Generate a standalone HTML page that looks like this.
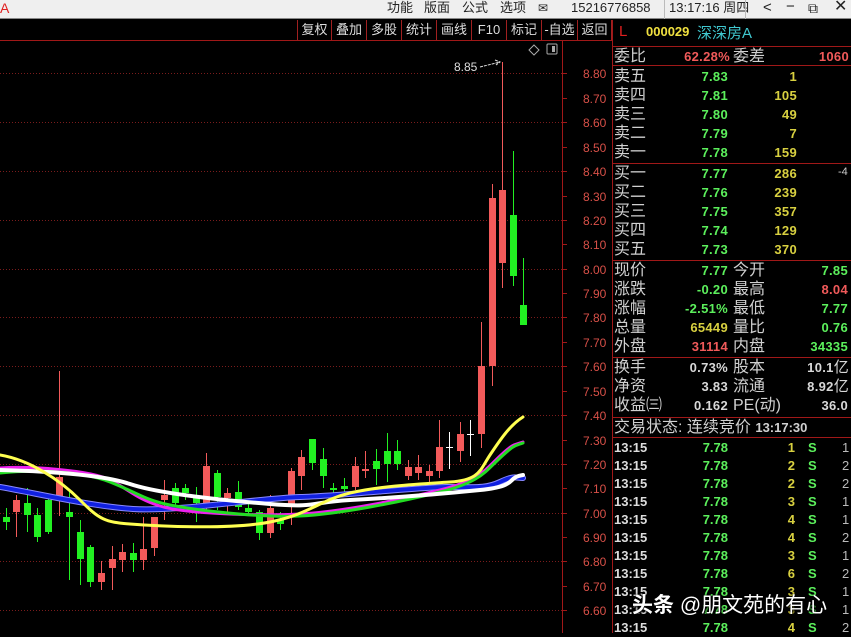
<!DOCTYPE html>
<html><head><meta charset="utf-8">
<style>
*{margin:0;padding:0;box-sizing:border-box}
body{width:851px;height:633px;overflow:hidden;background:#000;position:relative;font-family:"Liberation Sans","Noto Sans CJK SC",sans-serif}
.top{position:absolute;left:0;top:0;width:851px;height:19px;background:#efefef;border-bottom:1px solid #888}
.top span{position:absolute;top:0;line-height:16px;font-size:13px;color:#222;font-family:"Liberation Sans","Noto Sans CJK SC",sans-serif}
.tb{position:absolute;top:20px;height:20px;font-size:13px;color:#ddd;line-height:20px;text-align:center;border-left:1px solid #a02020;font-family:"Liberation Sans","Noto Sans CJK SC",sans-serif}
.p{position:absolute;font-family:"Liberation Sans","Noto Sans CJK SC",sans-serif;white-space:nowrap}
.l{font-size:16px;color:#d0d0d0;line-height:19px;left:614px}
.n{font-size:13px;font-weight:bold;line-height:19px;text-align:right;letter-spacing:0.3px}
.g{color:#5cf05c}.y{color:#d8d040}.r{color:#f05a5a}.w{color:#d8d8d8}
.hl{position:absolute;left:612px;width:239px;height:1px;background:#a01818}
</style></head><body>
<div class="top">
<span style="left:0;color:#e02020;font-size:14px">A</span>
<span style="left:387px">功能</span><span style="left:424px">版面</span><span style="left:462px">公式</span><span style="left:500px">选项</span>
<span style="left:538px;font-size:12px">✉</span>
<span style="left:571px">15216776858</span>
<div style="position:absolute;left:664px;top:0;width:1px;height:19px;background:#bbb"></div>
<span style="left:669px">13:17:16 周四</span>
<div style="position:absolute;left:745px;top:0;width:1px;height:19px;background:#bbb"></div>
<span style="left:763px;font-size:15px">&lt;</span>
<span style="left:786px;font-size:15px;top:-1px">−</span>
<span style="left:808px;font-size:14px">⧉</span>
<span style="left:834px;font-size:16px;top:-1px">✕</span>
</div>
<div class="tb" style="left:297px;width:34px">复权</div>
<div class="tb" style="left:331px;width:35px">叠加</div>
<div class="tb" style="left:366px;width:35px">多股</div>
<div class="tb" style="left:401px;width:35px">统计</div>
<div class="tb" style="left:436px;width:35px">画线</div>
<div class="tb" style="left:471px;width:35px">F10</div>
<div class="tb" style="left:506px;width:35px">标记</div>
<div class="tb" style="left:541px;width:36px">-自选</div>
<div class="tb" style="left:577px;width:35px;border-right:1px solid #a02020">返回</div>
<div style="position:absolute;left:0;top:40px;width:612px;height:1px;background:#a01818"></div>

<svg style="position:absolute;left:0;top:0" width="612" height="633">
<g stroke="#7a1c1c" stroke-dasharray="1 2" stroke-width="1">
<line x1="0" y1="73.5" x2="562" y2="73.5"/><line x1="0" y1="122.5" x2="562" y2="122.5"/><line x1="0" y1="171.5" x2="562" y2="171.5"/><line x1="0" y1="220.5" x2="562" y2="220.5"/><line x1="0" y1="269.5" x2="562" y2="269.5"/><line x1="0" y1="317.5" x2="562" y2="317.5"/><line x1="0" y1="366.5" x2="562" y2="366.5"/><line x1="0" y1="415.5" x2="562" y2="415.5"/><line x1="0" y1="464.5" x2="562" y2="464.5"/><line x1="0" y1="513.5" x2="562" y2="513.5"/><line x1="0" y1="561.5" x2="562" y2="561.5"/><line x1="0" y1="610.5" x2="562" y2="610.5"/>
</g>
<line x1="562.5" y1="40" x2="562.5" y2="633" stroke="#a01818"/>
<g stroke="#a01818">
<line x1="562" y1="73.5" x2="567" y2="73.5"/><line x1="562" y1="98.5" x2="567" y2="98.5"/><line x1="562" y1="122.5" x2="567" y2="122.5"/><line x1="562" y1="147.5" x2="567" y2="147.5"/><line x1="562" y1="171.5" x2="567" y2="171.5"/><line x1="562" y1="196.5" x2="567" y2="196.5"/><line x1="562" y1="220.5" x2="567" y2="220.5"/><line x1="562" y1="244.5" x2="567" y2="244.5"/><line x1="562" y1="269.5" x2="567" y2="269.5"/><line x1="562" y1="293.5" x2="567" y2="293.5"/><line x1="562" y1="317.5" x2="567" y2="317.5"/><line x1="562" y1="342.5" x2="567" y2="342.5"/><line x1="562" y1="366.5" x2="567" y2="366.5"/><line x1="562" y1="391.5" x2="567" y2="391.5"/><line x1="562" y1="415.5" x2="567" y2="415.5"/><line x1="562" y1="440.5" x2="567" y2="440.5"/><line x1="562" y1="464.5" x2="567" y2="464.5"/><line x1="562" y1="488.5" x2="567" y2="488.5"/><line x1="562" y1="513.5" x2="567" y2="513.5"/><line x1="562" y1="537.5" x2="567" y2="537.5"/><line x1="562" y1="561.5" x2="567" y2="561.5"/><line x1="562" y1="586.5" x2="567" y2="586.5"/><line x1="562" y1="610.5" x2="567" y2="610.5"/>
</g>
<g fill="#d85048" font-size="12" font-family="Liberation Sans, sans-serif">
<text x="583" y="78">8.80</text><text x="583" y="103">8.70</text><text x="583" y="127">8.60</text><text x="583" y="152">8.50</text><text x="583" y="176">8.40</text><text x="583" y="201">8.30</text><text x="583" y="225">8.20</text><text x="583" y="249">8.10</text><text x="583" y="274">8.00</text><text x="583" y="298">7.90</text><text x="583" y="322">7.80</text><text x="583" y="347">7.70</text><text x="583" y="371">7.60</text><text x="583" y="396">7.50</text><text x="583" y="420">7.40</text><text x="583" y="445">7.30</text><text x="583" y="469">7.20</text><text x="583" y="493">7.10</text><text x="583" y="518">7.00</text><text x="583" y="542">6.90</text><text x="583" y="566">6.80</text><text x="583" y="591">6.70</text><text x="583" y="615">6.60</text>
</g>
<text x="454" y="71" fill="#ddd" font-size="12" font-family="Liberation Sans, sans-serif">8.85</text>
<path d="M480 67 L500 62 M495 60 L500 62 L496 65" stroke="#ddd" fill="none" stroke-dasharray="3 1"/>
<path d="M534 45 L539 50 L534 55 L529 50Z" stroke="#aaa" fill="none"/>
<rect x="547" y="44" width="10" height="10" stroke="#aaa" fill="none" rx="1"/><rect x="552" y="46" width="3" height="6" fill="#aaa"/>

<g stroke-width="1">
<line x1="6.5" y1="508" x2="6.5" y2="530" stroke="#22f022"/><rect x="3" y="517" width="7" height="5" fill="#22f022"/>
<line x1="16.5" y1="495" x2="16.5" y2="537" stroke="#f25a5a"/><rect x="13" y="500" width="7" height="12" fill="#f25a5a"/>
<line x1="27.5" y1="488" x2="27.5" y2="532" stroke="#22f022"/><rect x="24" y="503" width="7" height="12" fill="#22f022"/>
<line x1="37.5" y1="508" x2="37.5" y2="542" stroke="#22f022"/><rect x="34" y="515" width="7" height="22" fill="#22f022"/>
<line x1="48.5" y1="498" x2="48.5" y2="534" stroke="#22f022"/><rect x="45" y="500" width="7" height="32" fill="#22f022"/>
<line x1="59.5" y1="371" x2="59.5" y2="516" stroke="#f25a5a"/><rect x="56" y="477" width="7" height="20" fill="#f25a5a"/>
<line x1="69.5" y1="492" x2="69.5" y2="580" stroke="#22f022"/><rect x="66" y="512" width="7" height="5" fill="#22f022"/>
<line x1="80.5" y1="520" x2="80.5" y2="585" stroke="#22f022"/><rect x="77" y="532" width="7" height="27" fill="#22f022"/>
<line x1="90.5" y1="545" x2="90.5" y2="587" stroke="#22f022"/><rect x="87" y="547" width="7" height="35" fill="#22f022"/>
<line x1="101.5" y1="561" x2="101.5" y2="590" stroke="#f25a5a"/><rect x="98" y="573" width="7" height="9" fill="#f25a5a"/>
<line x1="112.5" y1="546" x2="112.5" y2="590" stroke="#f25a5a"/><rect x="109" y="559" width="7" height="9" fill="#f25a5a"/>
<line x1="122.5" y1="544" x2="122.5" y2="572" stroke="#f25a5a"/><rect x="119" y="552" width="7" height="8" fill="#f25a5a"/>
<line x1="133.5" y1="543" x2="133.5" y2="572" stroke="#22f022"/><rect x="130" y="553" width="7" height="7" fill="#22f022"/>
<line x1="143.5" y1="517" x2="143.5" y2="570" stroke="#f25a5a"/><rect x="140" y="549" width="7" height="11" fill="#f25a5a"/>
<line x1="154.5" y1="517" x2="154.5" y2="556" stroke="#f25a5a"/><rect x="151" y="517" width="7" height="31" fill="#f25a5a"/>
<line x1="164.5" y1="480" x2="164.5" y2="520" stroke="#f25a5a"/><rect x="161" y="495" width="7" height="5" fill="#f25a5a"/>
<line x1="175.5" y1="483" x2="175.5" y2="505" stroke="#22f022"/><rect x="172" y="488" width="7" height="15" fill="#22f022"/>
<line x1="185.5" y1="484" x2="185.5" y2="500" stroke="#22f022"/><rect x="182" y="488" width="7" height="5" fill="#22f022"/>
<line x1="196.5" y1="487" x2="196.5" y2="522" stroke="#22f022"/><rect x="193" y="497" width="7" height="6" fill="#22f022"/>
<line x1="206.5" y1="453" x2="206.5" y2="510" stroke="#f25a5a"/><rect x="203" y="466" width="7" height="41" fill="#f25a5a"/>
<line x1="217.5" y1="470" x2="217.5" y2="510" stroke="#22f022"/><rect x="214" y="473" width="7" height="24" fill="#22f022"/>
<line x1="227.5" y1="488" x2="227.5" y2="512" stroke="#f25a5a"/><rect x="224" y="493" width="7" height="5" fill="#f25a5a"/>
<line x1="238.5" y1="481" x2="238.5" y2="510" stroke="#22f022"/><rect x="235" y="492" width="7" height="15" fill="#22f022"/>
<line x1="248.5" y1="500" x2="248.5" y2="515" stroke="#22f022"/><rect x="245" y="508" width="7" height="4" fill="#22f022"/>
<line x1="259.5" y1="510" x2="259.5" y2="540" stroke="#22f022"/><rect x="256" y="512" width="7" height="21" fill="#22f022"/>
<line x1="270.5" y1="495" x2="270.5" y2="538" stroke="#f25a5a"/><rect x="267" y="508" width="7" height="25" fill="#f25a5a"/>
<line x1="280.5" y1="512" x2="280.5" y2="530" stroke="#22f022"/><rect x="277" y="520" width="7" height="4" fill="#22f022"/>
<line x1="291.5" y1="468" x2="291.5" y2="525" stroke="#f25a5a"/><rect x="288" y="471" width="7" height="36" fill="#f25a5a"/>
<line x1="301.5" y1="450" x2="301.5" y2="490" stroke="#f25a5a"/><rect x="298" y="457" width="7" height="19" fill="#f25a5a"/>
<line x1="312.5" y1="439" x2="312.5" y2="470" stroke="#22f022"/><rect x="309" y="439" width="7" height="24" fill="#22f022"/>
<line x1="323.5" y1="448" x2="323.5" y2="488" stroke="#22f022"/><rect x="320" y="459" width="7" height="17" fill="#22f022"/>
<line x1="333.5" y1="483" x2="333.5" y2="496" stroke="#22f022"/><rect x="330" y="488" width="7" height="2" fill="#22f022"/>
<line x1="344.5" y1="478" x2="344.5" y2="495" stroke="#22f022"/><rect x="341" y="486" width="7" height="3" fill="#22f022"/>
<line x1="355.5" y1="457" x2="355.5" y2="490" stroke="#f25a5a"/><rect x="352" y="466" width="7" height="21" fill="#f25a5a"/>
<line x1="365.5" y1="451" x2="365.5" y2="478" stroke="#f25a5a"/><rect x="362" y="469" width="7" height="2" fill="#f25a5a"/>
<line x1="376.5" y1="449" x2="376.5" y2="485" stroke="#22f022"/><rect x="373" y="461" width="7" height="8" fill="#22f022"/>
<line x1="387.5" y1="433" x2="387.5" y2="482" stroke="#22f022"/><rect x="384" y="451" width="7" height="13" fill="#22f022"/>
<line x1="397.5" y1="440" x2="397.5" y2="470" stroke="#22f022"/><rect x="394" y="451" width="7" height="13" fill="#22f022"/>
<line x1="408.5" y1="460" x2="408.5" y2="480" stroke="#f25a5a"/><rect x="405" y="467" width="7" height="9" fill="#f25a5a"/>
<line x1="418.5" y1="455" x2="418.5" y2="480" stroke="#f25a5a"/><rect x="415" y="467" width="7" height="6" fill="#f25a5a"/>
<line x1="429.5" y1="465" x2="429.5" y2="483" stroke="#f25a5a"/><rect x="426" y="471" width="7" height="5" fill="#f25a5a"/>
<line x1="439.5" y1="420" x2="439.5" y2="478" stroke="#f25a5a"/><rect x="436" y="447" width="7" height="24" fill="#f25a5a"/>
<line x1="449.5" y1="432" x2="449.5" y2="469" stroke="#fff"/><line x1="446" y1="447.5" x2="453" y2="447.5" stroke="#fff"/>
<line x1="460.5" y1="422" x2="460.5" y2="462" stroke="#f25a5a"/><rect x="457" y="434" width="7" height="17" fill="#f25a5a"/>
<line x1="470.5" y1="420" x2="470.5" y2="456" stroke="#fff"/><line x1="467" y1="434.5" x2="474" y2="434.5" stroke="#fff"/>
<line x1="481.5" y1="322" x2="481.5" y2="448" stroke="#f25a5a"/><rect x="478" y="366" width="7" height="68" fill="#f25a5a"/>
<line x1="492.5" y1="184" x2="492.5" y2="386" stroke="#f25a5a"/><rect x="489" y="198" width="7" height="168" fill="#f25a5a"/>
<line x1="502.5" y1="62" x2="502.5" y2="288" stroke="#f25a5a"/><rect x="499" y="190" width="7" height="73" fill="#f25a5a"/>
<line x1="513.5" y1="151" x2="513.5" y2="286" stroke="#22f022"/><rect x="510" y="215" width="7" height="61" fill="#22f022"/>
<line x1="523.5" y1="258" x2="523.5" y2="325" stroke="#22f022"/><rect x="520" y="305" width="7" height="20" fill="#22f022"/>
</g>
<g fill="none" stroke-linejoin="round" stroke-linecap="round">
<path stroke="#8888ff" stroke-width="6" d="M0,487 C40,494 90,506 133,509 S260,498 300,497 S420,487 447,487 S485,489 500,482 S515,478 523,478"/>
<path stroke="#1020e0" stroke-width="4" d="M0,487 C40,494 90,506 133,509 S260,498 300,497 S420,487 447,487 S485,489 500,482 S515,478 523,478"/>
<path stroke="#ee22ee" stroke-width="3" d="M0,468 C30,466 90,470 110,480 S135,498 160,506 S260,516 300,514 S400,500 440,490 S485,470 500,456 S515,445 523,442"/>
<path stroke="#22dd22" stroke-width="3" d="M0,473 C30,470 80,470 110,482 S145,500 170,505 S260,518 300,516 S400,502 440,492 S485,472 500,458 S515,446 523,443"/>
<path stroke="#ffffff" stroke-width="4" d="M0,470 C40,471 100,474 130,484 S220,500 270,504 S310,502 350,500 S440,494 480,490 S505,478 523,475"/>
<path stroke="#ffff50" stroke-width="3" d="M0,455 C30,460 60,480 80,500 S105,522 130,524 S230,530 270,522 S320,500 350,493 S420,484 450,482 S480,470 490,455 S510,425 523,417"/>
</g>
</svg>

<div style="position:absolute;left:612px;top:20px;width:1px;height:613px;background:#a01818"></div>
<div class="p" style="left:619px;top:23px;font-size:15px;color:#e02020">L</div>
<div class="p" style="left:646px;top:24px;font-size:13px;font-weight:bold;color:#f0e040">000029</div>
<div class="p" style="left:697px;top:22px;font-size:15px;color:#40c8d0">深深房A</div>
<div class="hl" style="top:46px"></div>
<div class="p l" style="top:47px">委比</div><div class="p n r" style="left:620px;width:110px;top:47px">62.28%</div>
<div class="p l" style="left:733px;top:47px">委差</div><div class="p n r" style="left:760px;width:89px;top:47px">1060</div>
<div class="hl" style="top:65px"></div>

<div class="p l" style="top:67px">卖五</div><div class="p n g" style="left:640px;width:88px;top:67px">7.83</div><div class="p n y" style="left:740px;width:57px;top:67px">1</div>
<div class="p l" style="top:86px">卖四</div><div class="p n g" style="left:640px;width:88px;top:86px">7.81</div><div class="p n y" style="left:740px;width:57px;top:86px">105</div>
<div class="p l" style="top:105px">卖三</div><div class="p n g" style="left:640px;width:88px;top:105px">7.80</div><div class="p n y" style="left:740px;width:57px;top:105px">49</div>
<div class="p l" style="top:124px">卖二</div><div class="p n g" style="left:640px;width:88px;top:124px">7.79</div><div class="p n y" style="left:740px;width:57px;top:124px">7</div>
<div class="p l" style="top:143px">卖一</div><div class="p n g" style="left:640px;width:88px;top:143px">7.78</div><div class="p n y" style="left:740px;width:57px;top:143px">159</div>
<div class="hl" style="top:163px"></div>
<div class="p l" style="top:164px">买一</div><div class="p n g" style="left:640px;width:88px;top:164px">7.77</div><div class="p n y" style="left:740px;width:57px;top:164px">286</div><div class="p" style="left:838px;top:166px;font-size:11px;color:#ccc">-4</div>
<div class="p l" style="top:183px">买二</div><div class="p n g" style="left:640px;width:88px;top:183px">7.76</div><div class="p n y" style="left:740px;width:57px;top:183px">239</div>
<div class="p l" style="top:202px">买三</div><div class="p n g" style="left:640px;width:88px;top:202px">7.75</div><div class="p n y" style="left:740px;width:57px;top:202px">357</div>
<div class="p l" style="top:221px">买四</div><div class="p n g" style="left:640px;width:88px;top:221px">7.74</div><div class="p n y" style="left:740px;width:57px;top:221px">129</div>
<div class="p l" style="top:240px">买五</div><div class="p n g" style="left:640px;width:88px;top:240px">7.73</div><div class="p n y" style="left:740px;width:57px;top:240px">370</div>
<div class="hl" style="top:260px"></div>

<div class="p l" style="top:261px">现价</div><div class="p n g" style="left:640px;width:88px;top:261px">7.77</div><div class="p l" style="left:733px;top:261px">今开</div><div class="p n g" style="left:760px;width:88px;top:261px">7.85</div>
<div class="p l" style="top:280px">涨跌</div><div class="p n g" style="left:640px;width:88px;top:280px">-0.20</div><div class="p l" style="left:733px;top:280px">最高</div><div class="p n r" style="left:760px;width:88px;top:280px">8.04</div>
<div class="p l" style="top:299px">涨幅</div><div class="p n g" style="left:640px;width:88px;top:299px">-2.51%</div><div class="p l" style="left:733px;top:299px">最低</div><div class="p n g" style="left:760px;width:88px;top:299px">7.77</div>
<div class="p l" style="top:318px">总量</div><div class="p n y" style="left:640px;width:88px;top:318px">65449</div><div class="p l" style="left:733px;top:318px">量比</div><div class="p n g" style="left:760px;width:88px;top:318px">0.76</div>
<div class="p l" style="top:337px">外盘</div><div class="p n r" style="left:640px;width:88px;top:337px">31114</div><div class="p l" style="left:733px;top:337px">内盘</div><div class="p n g" style="left:760px;width:88px;top:337px">34335</div>
<div class="hl" style="top:357px"></div>
<div class="p l" style="top:358px">换手</div><div class="p n w" style="left:640px;width:88px;top:358px">0.73%</div><div class="p l" style="left:733px;top:358px">股本</div><div class="p n w" style="left:760px;width:89px;top:358px">10.1<span style="font-weight:normal;font-size:15px">亿</span></div>
<div class="p l" style="top:377px">净资</div><div class="p n w" style="left:640px;width:88px;top:377px">3.83</div><div class="p l" style="left:733px;top:377px">流通</div><div class="p n w" style="left:760px;width:89px;top:377px">8.92<span style="font-weight:normal;font-size:15px">亿</span></div>
<div class="p l" style="top:396px">收益㈢</div><div class="p n w" style="left:640px;width:88px;top:396px">0.162</div><div class="p l" style="left:733px;top:396px">PE(动)</div><div class="p n w" style="left:760px;width:88px;top:396px">36.0</div>
<div class="hl" style="top:417px"></div>
<div class="p l" style="top:418px">交易状态: 连续竞价 <span style="font-size:13px;font-weight:bold">13:17:30</span></div>
<div class="hl" style="top:437px"></div>

<div style="position:absolute;left:614px;top:439px;width:237px;font-family:'Liberation Sans',sans-serif;font-size:13px;font-weight:bold;line-height:18px">
<div style="position:relative;height:18px"><span style="position:absolute;left:0;color:#ddd">13:15</span><span style="position:absolute;right:123px;color:#5cf05c">7.78</span><span style="position:absolute;right:56px;color:#d8d040">1</span><span style="position:absolute;left:194px;color:#5cf05c">S</span><span style="position:absolute;left:228px;color:#bbb;font-weight:normal">1</span></div>
<div style="position:relative;height:18px"><span style="position:absolute;left:0;color:#ddd">13:15</span><span style="position:absolute;right:123px;color:#5cf05c">7.78</span><span style="position:absolute;right:56px;color:#d8d040">2</span><span style="position:absolute;left:194px;color:#5cf05c">S</span><span style="position:absolute;left:228px;color:#bbb;font-weight:normal">2</span></div>
<div style="position:relative;height:18px"><span style="position:absolute;left:0;color:#ddd">13:15</span><span style="position:absolute;right:123px;color:#5cf05c">7.78</span><span style="position:absolute;right:56px;color:#d8d040">2</span><span style="position:absolute;left:194px;color:#5cf05c">S</span><span style="position:absolute;left:228px;color:#bbb;font-weight:normal">2</span></div>
<div style="position:relative;height:18px"><span style="position:absolute;left:0;color:#ddd">13:15</span><span style="position:absolute;right:123px;color:#5cf05c">7.78</span><span style="position:absolute;right:56px;color:#d8d040">3</span><span style="position:absolute;left:194px;color:#5cf05c">S</span><span style="position:absolute;left:228px;color:#bbb;font-weight:normal">1</span></div>
<div style="position:relative;height:18px"><span style="position:absolute;left:0;color:#ddd">13:15</span><span style="position:absolute;right:123px;color:#5cf05c">7.78</span><span style="position:absolute;right:56px;color:#d8d040">4</span><span style="position:absolute;left:194px;color:#5cf05c">S</span><span style="position:absolute;left:228px;color:#bbb;font-weight:normal">1</span></div>
<div style="position:relative;height:18px"><span style="position:absolute;left:0;color:#ddd">13:15</span><span style="position:absolute;right:123px;color:#5cf05c">7.78</span><span style="position:absolute;right:56px;color:#d8d040">4</span><span style="position:absolute;left:194px;color:#5cf05c">S</span><span style="position:absolute;left:228px;color:#bbb;font-weight:normal">2</span></div>
<div style="position:relative;height:18px"><span style="position:absolute;left:0;color:#ddd">13:15</span><span style="position:absolute;right:123px;color:#5cf05c">7.78</span><span style="position:absolute;right:56px;color:#d8d040">3</span><span style="position:absolute;left:194px;color:#5cf05c">S</span><span style="position:absolute;left:228px;color:#bbb;font-weight:normal">1</span></div>
<div style="position:relative;height:18px"><span style="position:absolute;left:0;color:#ddd">13:15</span><span style="position:absolute;right:123px;color:#5cf05c">7.78</span><span style="position:absolute;right:56px;color:#d8d040">6</span><span style="position:absolute;left:194px;color:#5cf05c">S</span><span style="position:absolute;left:228px;color:#bbb;font-weight:normal">2</span></div>
<div style="position:relative;height:18px"><span style="position:absolute;left:0;color:#ddd">13:15</span><span style="position:absolute;right:123px;color:#5cf05c">7.78</span><span style="position:absolute;right:56px;color:#d8d040">3</span><span style="position:absolute;left:194px;color:#5cf05c">S</span><span style="position:absolute;left:228px;color:#bbb;font-weight:normal">1</span></div>
<div style="position:relative;height:18px"><span style="position:absolute;left:0;color:#ddd">13:15</span><span style="position:absolute;right:123px;color:#5cf05c">7.78</span><span style="position:absolute;right:56px;color:#d8d040">3</span><span style="position:absolute;left:194px;color:#5cf05c">S</span><span style="position:absolute;left:228px;color:#bbb;font-weight:normal">1</span></div>
<div style="position:relative;height:18px"><span style="position:absolute;left:0;color:#ddd">13:15</span><span style="position:absolute;right:123px;color:#5cf05c">7.78</span><span style="position:absolute;right:56px;color:#d8d040">4</span><span style="position:absolute;left:194px;color:#5cf05c">S</span><span style="position:absolute;left:228px;color:#bbb;font-weight:normal">2</span></div>
</div>

<div class="p" style="left:632px;top:589px;font-size:21px;color:#fff;text-shadow:0 0 3px #000,1px 1px 2px #000;font-family:'Liberation Sans','Noto Sans CJK SC',sans-serif"><b>头条</b> @朋文苑的有心</div>
</body></html>
